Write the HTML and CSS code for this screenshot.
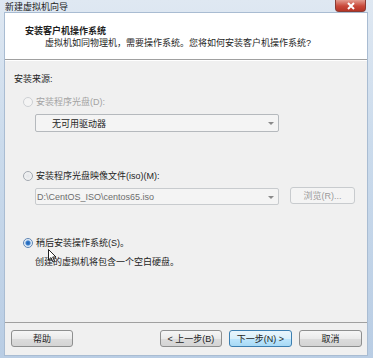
FILE: index.html
```html
<!DOCTYPE html>
<html lang="zh-CN">

<head>
    <meta charset="UTF-8">
    <meta name="viewport" content="width=device-width, initial-scale=1.0">
    <title>新建虚拟机向导</title>
    <link rel="stylesheet" href="styles.css">
</head>

<body>

    <div class="window">
        <div class="titlebar">
            <span class="caption">新建虚拟机向导</span>
            <button class="close">
                <svg width="10" height="8" viewBox="0 0 10 8">
                    <path d="M2 1 L8 7 M8 1 L2 7" stroke="#fff" stroke-width="2" fill="none" />
                </svg>
            </button>
        </div>

        <div class="client">
            <div class="header">
                <h4>安装客户机操作系统</h4>
                <p class="subtitle">虚拟机如同物理机，需要操作系统。您将如何安装客户机操作系统?</p>
            </div>

            <div class="content">
                <p class="group-label">安装来源:</p>

                <label class="radio disabled">
                    <span class="dot"></span>
                    安装程序光盘(D):
                </label>
                <div class="combo drive">
                    <span>无可用驱动器</span>
                    <span class="arrow"></span>
                </div>

                <label class="radio second">
                    <span class="dot"></span>
                    安装程序光盘映像文件(iso)(M):
                </label>
                <div class="file-row">
                    <div class="combo iso">
                        <span>D:\CentOS_ISO\centos65.iso</span>
                        <span class="arrow"></span>
                    </div>
                    <button class="btn browse" disabled>浏览(R)...</button>
                </div>

                <label class="radio third">
                    <span class="dot checked"></span>
                    稍后安装操作系统(S)。
                </label>
                <p class="hint">创建的虚拟机将包含一个空白硬盘。</p>
            </div>

            <div class="footer">
                <button class="btn">帮助</button>
                <div class="nav">
                    <button class="btn">&lt; 上一步(B)</button>
                    <button class="btn primary">下一步(N) &gt;</button>
                    <button class="btn">取消</button>
                </div>
            </div>
        </div>

        <svg class="cursor" width="9" height="14" viewBox="0 0 9 14">
            <path d="M0.5 0.5 L0.5 11 L3 8.6 L5 13 L6.6 12.3 L4.7 8 L8 8 Z" fill="#fff" stroke="#222" stroke-width="1" />
        </svg>
    </div>

</body>

</html>
```

FILE: styles.css
```css
body {
    margin: 0;
    font-family: 'Liberation Sans', 'Noto Sans CJK SC', sans-serif;
    font-size: 9px;
    color: #1e1e1e;
}

p,
h4 {
    margin: 0;
    padding: 0;
}

.window {
    position: relative;
    width: 373px;
    height: 358px;
    background: linear-gradient(to bottom, #dfe8f2, #cbdbec 40%, #b9cde4);
    display: flex;
    flex-direction: column;
}

.titlebar {
    height: 13px;
    display: flex;
    align-items: center;
    justify-content: space-between;
    padding-left: 5px;
    padding-right: 7px;
}

.caption {
    line-height: 12px;
    color: #222;
}

.close {
    width: 31px;
    height: 12px;
    margin-top: -1px;
    border: 1px solid #8a3b33;
    border-top: none;
    border-radius: 0 0 4px 4px;
    background: linear-gradient(to bottom, #e49c8f, #c9493a 55%, #b63426);
    display: flex;
    align-items: center;
    justify-content: center;
    padding: 0;
}

.client {
    margin: 0 6px 0 5px;
    height: 342px;
    background: #f0f0f0;
    display: flex;
    flex-direction: column;
    box-shadow: 0 0 0 1px #a9bcd2;
}

.header {
    height: 47px;
    box-sizing: border-box;
    background: #fff;
    padding: 12px 0 0 20px;
    border-bottom: 1px solid #a0a0a0;
    box-shadow: 0 1px 0 #fff;
}

.header h4 {
    font-size: 9px;
    line-height: 12px;
    font-weight: bold;
}

.subtitle {
    line-height: 12px;
    margin-left: 20px;
}

.content {
    padding: 13px 0 0 9px;
    display: flex;
    flex-direction: column;
}

.group-label {
    line-height: 12px;
}

.radio {
    display: flex;
    align-items: center;
    gap: 3px;
    line-height: 12px;
    margin-left: 9px;
    margin-top: 11px;
}

.radio.disabled {
    color: #a3a3a3;
}

.radio.second {
    margin-top: 38px;
}

.radio.third {
    margin-top: 32px;
}

.dot {
    width: 8px;
    height: 8px;
    border-radius: 50%;
    border: 1px solid #a3a9b0;
    background: radial-gradient(circle, #e4e6e9, #f7f7f7);
    box-sizing: content-box;
    flex-shrink: 0;
}

.radio.disabled .dot {
    border-color: #cdd0d4;
    background: #f4f4f4;
}

.dot.checked {
    border-color: #5f86b4;
    background: radial-gradient(circle, #1c5fb0 0, #3a80cf 2px, #cfe0f3 3px, #eef4fa 4px);
}

.combo {
    position: relative;
    height: 18px;
    box-sizing: border-box;
    width: 244px;
    border: 1px solid #b5b9bd;
    border-radius: 2px;
    background: #f4f4f4;
    display: flex;
    align-items: center;
}

.combo.drive {
    margin: 6px 0 0 21px;
    padding-left: 16px;
}

.combo.iso {
    border-color: #c8cbce;
    padding-left: 1px;
    color: #6d6d6d;
    height: 17px;
    margin-top: 1px;
}

.arrow {
    position: absolute;
    right: 4px;
    top: 7px;
    border-left: 3px solid transparent;
    border-right: 3px solid transparent;
    border-top: 3px solid #8a8a8a;
}

.file-row {
    display: flex;
    margin: 5px 0 0 21px;
    gap: 11px;
}

.btn {
    height: 17px;
    width: 62px;
    padding: 0;
    border: 1px solid #8e8f8f;
    border-radius: 3px;
    background: linear-gradient(to bottom, #f6f6f6, #eaeaea 50%, #dcdcdc 51%, #d4d4d4);
    font-family: inherit;
    font-size: 9px;
    color: #1e1e1e;
    line-height: 14px;
}

.btn.browse {
    width: 65px;
    border-color: #c8cbce;
    background: #f4f4f4;
    color: #9a9a9a;
}

.btn.primary {
    width: 63px;
    border-color: #3c7fb1;
    background: linear-gradient(to bottom, #eaf6fd, #d9f0fc 50%, #bee6fd 51%, #a7d9f5);
}

.hint {
    line-height: 12px;
    margin: 7px 0 0 21px;
}

.footer {
    margin-top: auto;
    border-top: 1px solid #a0a0a0;
    padding: 7px 5px 8px 6px;
    display: flex;
    justify-content: space-between;
}

.nav {
    display: flex;
    gap: 7px;
}

.nav .btn:last-child {
    width: 63px;
}

.cursor {
    position: absolute;
    left: 48px;
    top: 249px;
}
```
